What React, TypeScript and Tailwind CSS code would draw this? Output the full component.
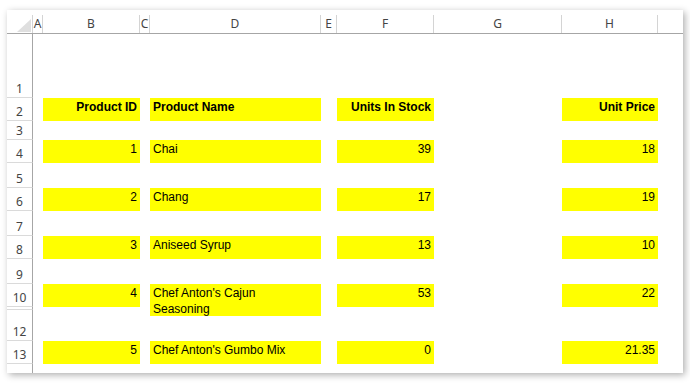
import React from 'react';

type Cell = { text?: string; bold?: boolean; align?: 'left' | 'right'; fill?: boolean; tall?: boolean };

const colLetters = ['A', 'B', 'C', 'D', 'E', 'F', 'G', 'H'];
const colWidths = ['w-[10px]', 'w-[97px]', 'w-[10px]', 'w-[171px]', 'w-[16px]', 'w-[97px]', 'w-[128px]', 'w-[96px]'];

const rowHeights: { [key: number]: string } = {
  1: 'h-[64px]',
  2: 'h-[23px]',
  3: 'h-[19px]',
  4: 'h-[23px]',
  5: 'h-[25px]',
  6: 'h-[23px]',
  7: 'h-[25px]',
  8: 'h-[23px]',
  9: 'h-[25px]',
  10: 'h-[23px]',
  11: 'h-[3px]',
  12: 'h-[31px]',
  13: 'h-[23px]',
};

const record = (id: string, name: string, stock: string, price: string, tall = false): Cell[] => [
  {},
  { text: id, align: 'right', fill: true },
  {},
  { text: name, align: 'left', fill: true, tall },
  {},
  { text: stock, align: 'right', fill: true },
  {},
  { text: price, align: 'right', fill: true },
];

const data: { [key: number]: Cell[] } = {
  2: [
    {},
    { text: 'Product ID', bold: true, align: 'right', fill: true },
    {},
    { text: 'Product Name', bold: true, align: 'left', fill: true },
    {},
    { text: 'Units In Stock', bold: true, align: 'right', fill: true },
    {},
    { text: 'Unit Price', bold: true, align: 'right', fill: true },
  ],
  4: record('1', 'Chai', '39', '18'),
  6: record('2', 'Chang', '17', '19'),
  8: record('3', 'Aniseed Syrup', '13', '10'),
  10: record('4', "Chef Anton's Cajun Seasoning", '53', '22', true),
  13: record('5', "Chef Anton's Gumbo Mix", '0', '21.35'),
};

const headerFont = { fontFamily: '"Noto Sans", "Open Sans", sans-serif' };
const cellFont = { fontFamily: '"Liberation Sans", Arial, sans-serif' };

function SheetRow({ n }: { n: number }) {
  const cells = data[n];
  return (
    <div className={`flex ${rowHeights[n]}`}>
      <div
        className="w-[26px] shrink-0 flex items-end justify-center overflow-hidden border-r border-b border-r-[#a6a6a6] border-b-[#dadada] pb-[1px] text-[12px] leading-[14px] text-[#444]"
        style={headerFont}
      >
        {n}
      </div>
      {colWidths.map((w, i) => {
        const c = cells?.[i];
        return (
          <div key={i} className={`${w} shrink-0 h-full`}>
            {c?.fill && (
              <div
                className={`relative z-10 bg-[#ffff00] pl-[3px] pt-[1px] text-[12px] leading-[16px] text-black ${
                  c.tall ? 'h-[32px] pr-[20px]' : 'h-full pr-[3px]'
                } ${c.bold ? 'font-bold' : ''} ${c.align === 'right' ? 'text-right' : 'text-left'}`}
                style={cellFont}
              >
                {c.text}
              </div>
            )}
          </div>
        );
      })}
      <div className="flex-1" />
    </div>
  );
}

export default function App() {
  return (
    <div className="w-[690px] h-[384px] bg-white pt-[10px] pl-[7px]">
      <div className="w-[676px] h-[363px] bg-white overflow-hidden shadow-[2px_2px_7px_rgba(0,0,0,0.32)]">
        <div className="flex h-[24px] border-b border-[#a6a6a6]">
          <div className="w-[26px] shrink-0 pt-[5px]">
            <div className="h-full border-r border-[#d4d4d4] flex items-end justify-end pr-[1px] pb-[1px]">
              <svg width="14" height="13" viewBox="0 0 14 13">
                <polygon points="14,0 14,13 0,13" fill="#dfdfdf" />
              </svg>
            </div>
          </div>
          {colLetters.map((l, i) => (
            <div key={l} className={`${colWidths[i]} shrink-0 pt-[5px]`}>
              <div
                className="h-full border-r border-[#d4d4d4] flex items-center justify-center text-[12px] leading-[14px] text-[#444]"
                style={headerFont}
              >
                {l}
              </div>
            </div>
          ))}
          <div className="flex-1" />
        </div>
        {[1, 2, 3, 4, 5, 6, 7, 8, 9, 10, 11, 12, 13].map((n) => (
          <SheetRow key={n} n={n} />
        ))}
        <div className="flex h-[9px]">
          <div className="w-[26px] shrink-0 border-r border-[#a6a6a6]" />
          <div className="flex-1" />
        </div>
      </div>
    </div>
  );
}
